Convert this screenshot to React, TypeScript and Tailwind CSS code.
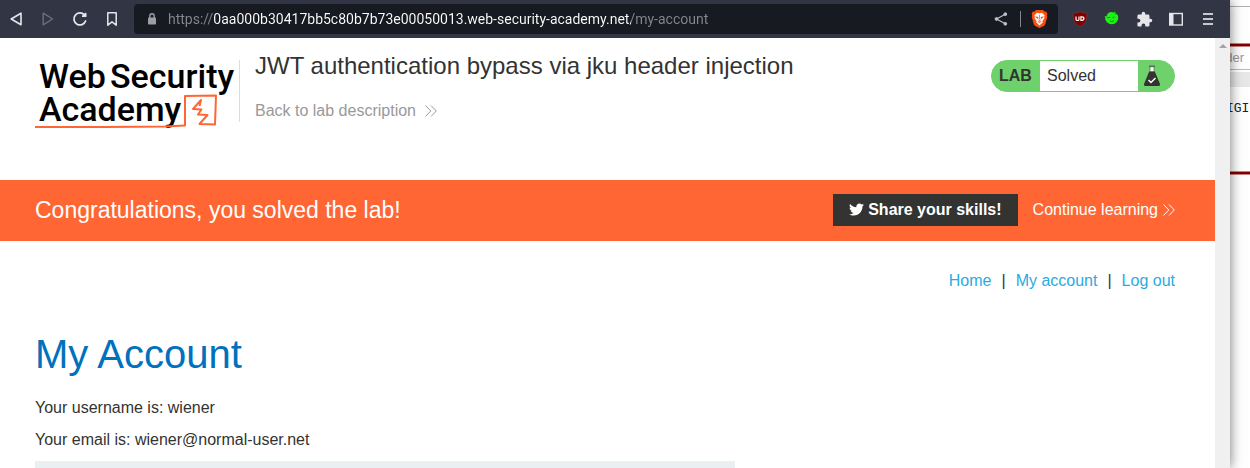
import React from "react";
import { FaTwitter } from "react-icons/fa";

const ui = "font-['Liberation_Sans',Arial,sans-serif]";

function ToolButton({ label, children }: { label: string; children: React.ReactNode }) {
  return (
    <button type="button" aria-label={label} className="flex size-8 items-center justify-center">
      {children}
    </button>
  );
}

function Chevrons() {
  return (
    <svg width="14" height="14" viewBox="0 0 14 14" fill="none" stroke="currentColor" strokeWidth="1" aria-hidden="true">
      <path d="M1.5 1.5 6.8 7 1.5 12.5M7 1.5 12.3 7 7 12.5" />
    </svg>
  );
}

function Toolbar() {
  return (
    <header className="flex h-[38px] shrink-0 items-center bg-[#323544] text-[#e6e6ea]">
      <nav aria-label="Browser navigation" className="flex w-[134px] shrink-0">
        <ToolButton label="Back">
          <svg width="16" height="16" viewBox="0 0 16 16" fill="none" stroke="currentColor" strokeWidth="1.6" strokeLinejoin="round">
            <path d="M13 2.2v11.6L3.2 8z" />
          </svg>
        </ToolButton>
        <ToolButton label="Forward">
          <svg width="16" height="16" viewBox="0 0 16 16" fill="none" stroke="#6d6f7a" strokeWidth="1.4" strokeLinejoin="round">
            <path d="M3.2 2.2v11.6L12.6 8z" />
          </svg>
        </ToolButton>
        <ToolButton label="Reload">
          <svg width="16" height="16" viewBox="0 0 16 16" fill="none" stroke="currentColor" strokeWidth="1.8" strokeLinecap="round">
            <path d="M13.6 10A6 6 0 1 1 12.4 3.9" />
            <path d="M13.6 2.6v2.6h-2.8z" fill="currentColor" strokeLinejoin="round" />
          </svg>
        </ToolButton>
        <ToolButton label="Bookmark">
          <svg width="16" height="16" viewBox="0 0 16 16" fill="none" stroke="currentColor" strokeWidth="1.5" strokeLinejoin="round">
            <path d="M3.8 1.8h8.4v12.4L8 10.8l-4.2 3.4z" />
          </svg>
        </ToolButton>
      </nav>

      <div className="flex h-[30px] min-w-0 flex-1 items-center rounded-[4px] bg-[#171a21] pl-[13px]">
        <svg width="10" height="12" viewBox="0 0 10 12" className="shrink-0" aria-hidden="true">
          <rect x="1" y="4.6" width="8" height="7" rx="0.8" fill="#9b9ea8" />
          <path d="M2.8 5V3a2.2 2.2 0 0 1 4.4 0v2" fill="none" stroke="#9b9ea8" strokeWidth="1.4" />
        </svg>
        <input
          aria-label="Address"
          defaultValue="https://0aa000b30417bb5c80b7b73e00050013.web-security-academy.net/my-account"
          className="ml-[11px] min-w-0 flex-1 bg-[linear-gradient(90deg,#85878e_46px,#ffffff_46px,#ffffff_463px,#85878e_463px)] bg-clip-text font-[Roboto,sans-serif] text-sm text-transparent outline-none"
        />
        <button type="button" aria-label="Share" className="mr-[12px]">
          <svg width="14" height="14" viewBox="0 0 14 14" fill="#bfc1c7" stroke="#bfc1c7">
            <path d="M11.3 2.2 2.5 7l8.8 4.8" fill="none" strokeWidth="1.2" />
            <circle cx="11.3" cy="2.2" r="1.4" />
            <circle cx="2.5" cy="7" r="1.4" />
            <circle cx="11.3" cy="11.8" r="1.4" />
          </svg>
        </button>
        <span className="h-4 w-px bg-[#85878e]" />
        <button type="button" aria-label="Brave Shields" className="mr-[10px] ml-[10px]">
          <svg width="17" height="18" viewBox="0 0 17 18">
            <path d="M5 0h7l1.7 1.8 1.5-.2 1.2 2.3-.5 1.4.4 1.4-2 7.4-1.2 1.6L8.500 18l-4.600-2.300-1.200-1.600-2-7.400.4-1.400-.5-1.400 1.200-2.300 1.500.2z" fill="#fb4f11" />
            <path d="M8.500 3.200 11 2.800l2.700 2.600-.5 1.400.2 1.400-2 2.800.4 1.300L8.500 15.400l-3.300-3.100.4-1.300-2-2.800.2-1.400-.5-1.400L6 2.800z" fill="#fff" />
            <path d="M4.700 6.800 7 7.300l-.4 1.500zM12.300 6.800 10 7.300l.4 1.500zM8.500 4.800v4.400M6.800 11.600l1.700 1 1.700-1M7.300 9.800l1.200.8 1.200-.8" fill="#fb4f11" stroke="#fb4f11" strokeWidth=".7" />
          </svg>
        </button>
      </div>

      <div className="flex shrink-0 pr-[6px] pl-[6px]">
        <ToolButton label="uBlock Origin">
          <svg width="16" height="16" viewBox="0 0 16 16">
            <path d="M8 .3c2 1.500 4 1.700 6.800 1.700 0 6.700 0 10-6.800 13.700C1.200 12 1.200 8.700 1.200 2 4 2 6 1.800 8 .3z" fill="#800000" stroke="#8f4a52" strokeWidth=".4" />
            <path d="M4 5.500v2.700c0 1.700 3 1.700 3 0V5.500" fill="none" stroke="#fff" strokeWidth="1.200" />
            <path d="M8.900 5.800h1c2.700 0 2.700 3.500 0 3.500h-1z" fill="none" stroke="#fff" strokeWidth="1.200" />
          </svg>
        </ToolButton>
        <ToolButton label="Extension">
          <svg width="16" height="16" viewBox="0 0 16 16">
            <path d="M5 1.500c1.500-.8 3.500-.8 4.800 0l1.500-1 .2 1.700 1.300.8C14 4.300 14.400 5.800 14.200 7.500 13.800 11 11.300 13 8 13.200 5 13.300 2.300 11.500 1.700 9L.8 8.600l.7-1.200L.6 5l2 .4C3 3.500 3.800 2.200 5 1.500z" fill="#1cf014" />
            <path d="M3.500 6.500h2.500M8.500 6.700l2-.7M6 10c1.500.8 3 .6 4-.3M11 1.500l.8 2" stroke="#128a1c" strokeWidth="1" fill="none" />
          </svg>
        </ToolButton>
        <ToolButton label="Extensions">
          <svg width="17" height="17" viewBox="0 0 24 24" fill="currentColor">
            <path d="M20.500 11H19V7a2 2 0 0 0-2-2h-4V3.500a2.500 2.500 0 0 0-5 0V5H4a2 2 0 0 0-2 2v3.800h1.500a2.700 2.700 0 0 1 0 5.400H2V20a2 2 0 0 0 2 2h3.800v-1.500a2.700 2.700 0 0 1 5.400 0V22H17a2 2 0 0 0 2-2v-4h1.500a2.500 2.500 0 0 0 0-5z" />
          </svg>
        </ToolButton>
        <ToolButton label="Sidebar">
          <svg width="14" height="14" viewBox="0 0 14 14">
            <rect x="0.700" y="1.500" width="12.600" height="11.500" fill="none" stroke="currentColor" strokeWidth="1.400" />
            <rect x="0.700" y="1.500" width="3.800" height="11.500" fill="currentColor" />
          </svg>
        </ToolButton>
        <ToolButton label="Menu">
          <svg width="12" height="12" viewBox="0 0 12 12" fill="#c8c9ce">
            <path d="M1 0h10v2H1zM1 5h10v2H1zM1 10h10v2H1z" />
          </svg>
        </ToolButton>
      </div>
    </header>
  );
}

function AcademyLogo() {
  return (
    <svg width="205" height="76" viewBox="0 0 205 76" className="shrink-0" role="img" aria-label="Web Security Academy">
      <g className="font-[Roboto,sans-serif] text-[34px] font-medium" fill="#000">
        <text x="4" y="32">Web</text>
        <text x="75" y="32">Security</text>
        <text x="4" y="65">Academy</text>
      </g>
      <g fill="none" stroke="#ff6633" strokeLinejoin="round">
        <path d="M0 71h70l60-.5 20-1" strokeWidth="2" />
        <path d="M150 70V40l31-.5-1 29-15.500-.500 8-9-9.500-.5 3.500-5-8.500-.5 8-9-1.500 6" strokeWidth="2" />
      </g>
    </svg>
  );
}

function LabStatus() {
  return (
    <div className="flex h-8 w-[184px] shrink-0 overflow-hidden rounded-full border border-[#6fd16c] bg-[#6fd16c] text-base leading-[30px] text-[#333332]">
      <span className="w-12 pl-[7px] font-bold">LAB</span>
      <span className="flex-1 bg-white pl-[7px]">Solved</span>
      <span className="flex w-9 items-center pl-[5px]">
        <svg width="18" height="22" viewBox="0 0 18 22" aria-hidden="true">
          <path d="M6.200 6.500h5.600l5.200 12.500q.6 2-1.500 2H2.500q-2.100 0-1.500-2z" fill="#333332" />
          <path d="M6.200 1.200h5.600" stroke="#333332" strokeWidth="1" />
          <path d="M7 1.800h4v4.700H7z" fill="#fff" stroke="#333332" strokeWidth=".5" />
          <path d="M5.500 15 8 17.500l4.500-4.500" fill="none" stroke="#fff" strokeWidth="1.500" />
        </svg>
      </span>
    </div>
  );
}

function Page() {
  return (
    <div className={`min-w-0 flex-1 overflow-hidden bg-white text-base text-[#333332] ${ui}`}>
      <div className="flex h-[142px] items-start px-[35px] pt-[18px] pr-10">
        <AcademyLogo />
        <div className="mt-1 ml-[-1px] h-[62px] border-l border-[#dcdcdc] pl-[15px]">
          <h2 className="-mt-2 text-2xl leading-7">JWT authentication bypass via jku header injection</h2>
          <a href="#lab" className="mt-[21px] flex items-center gap-2 leading-5 text-[#999999]">
            Back to lab description
            <Chevrons />
          </a>
        </div>
        <div className="mt-1 ml-auto">
          <LabStatus />
        </div>
      </div>

      <section className="flex h-[61px] items-center bg-[#ff6633] pr-[39px] pb-0.5 pl-[35px] text-white">
        <h4 className="text-[23px] leading-7">Congratulations, you solved the lab!</h4>
        <button type="button" className="ml-auto flex h-8 items-center gap-1 bg-[#333332] px-4 font-bold">
          <FaTwitter size={15} aria-hidden="true" />
          Share your skills!
        </button>
        <a href="#next" className="ml-[15px] flex items-center gap-1">
          Continue learning
          <Chevrons />
        </a>
      </section>

      <nav aria-label="Account" className="flex justify-end gap-[10px] pt-7 pr-10 leading-6 text-[#29abe2]">
        <a href="#home">Home</a>
        <span className="text-[#333332]">|</span>
        <a href="#account">My account</a>
        <span className="text-[#333332]">|</span>
        <a href="#logout">Log out</a>
      </nav>

      <main className="px-[35px]">
        <h1 className="mt-[37px] text-[40px] leading-12 text-[#0071bc]">My Account</h1>
        <p className="mt-[18px] leading-6">Your username is: wiener</p>
        <p className="mt-2 leading-6">Your email is: wiener@normal-user.net</p>
        <form aria-label="Update email" className="mt-[9px] h-40 w-[700px] max-w-full bg-[#eaeff2]" />
      </main>
    </div>
  );
}

function BackgroundWindow() {
  return (
    <aside className="flex w-5 shrink-0 flex-col overflow-hidden bg-white">
      <div className="h-[7px] border-b border-[#b0b0b0]" />
      <div className="mt-[36px] h-1 border-y border-[#c98080] bg-[#800000]" />
      <div className={`flex h-[23px] justify-end border-b border-[#bbbbbb] pr-[6px] text-[13px] leading-[21px] text-[#999999] ${ui}`}>der</div>
      <div className="mt-[2px] h-[15px] bg-[#e8e8e8]" />
      <div className="mt-[14px] -ml-1 font-['Liberation_Mono',monospace] text-[13px] leading-4 text-[#222222]">IGIN</div>
      <div className="mt-[54px] h-1 border-y border-[#c98080] bg-[#800000]" />
    </aside>
  );
}

export default function App() {
  return (
    <div className="flex h-screen overflow-hidden bg-white">
      <div className="z-10 flex min-w-0 flex-1 flex-col shadow-[0_0_12px_rgba(0,0,0,0.55)]">
        <Toolbar />
        <div className="flex min-h-0 flex-1">
          <Page />
          <div className="flex w-[15px] shrink-0 justify-center bg-[#f0f0f0] pt-[6px]">
            <svg width="8" height="4" viewBox="0 0 8 4" aria-hidden="true">
              <path d="M4 0 8 4H0z" fill="#a3a3a3" />
            </svg>
          </div>
        </div>
      </div>
      <BackgroundWindow />
    </div>
  );
}
